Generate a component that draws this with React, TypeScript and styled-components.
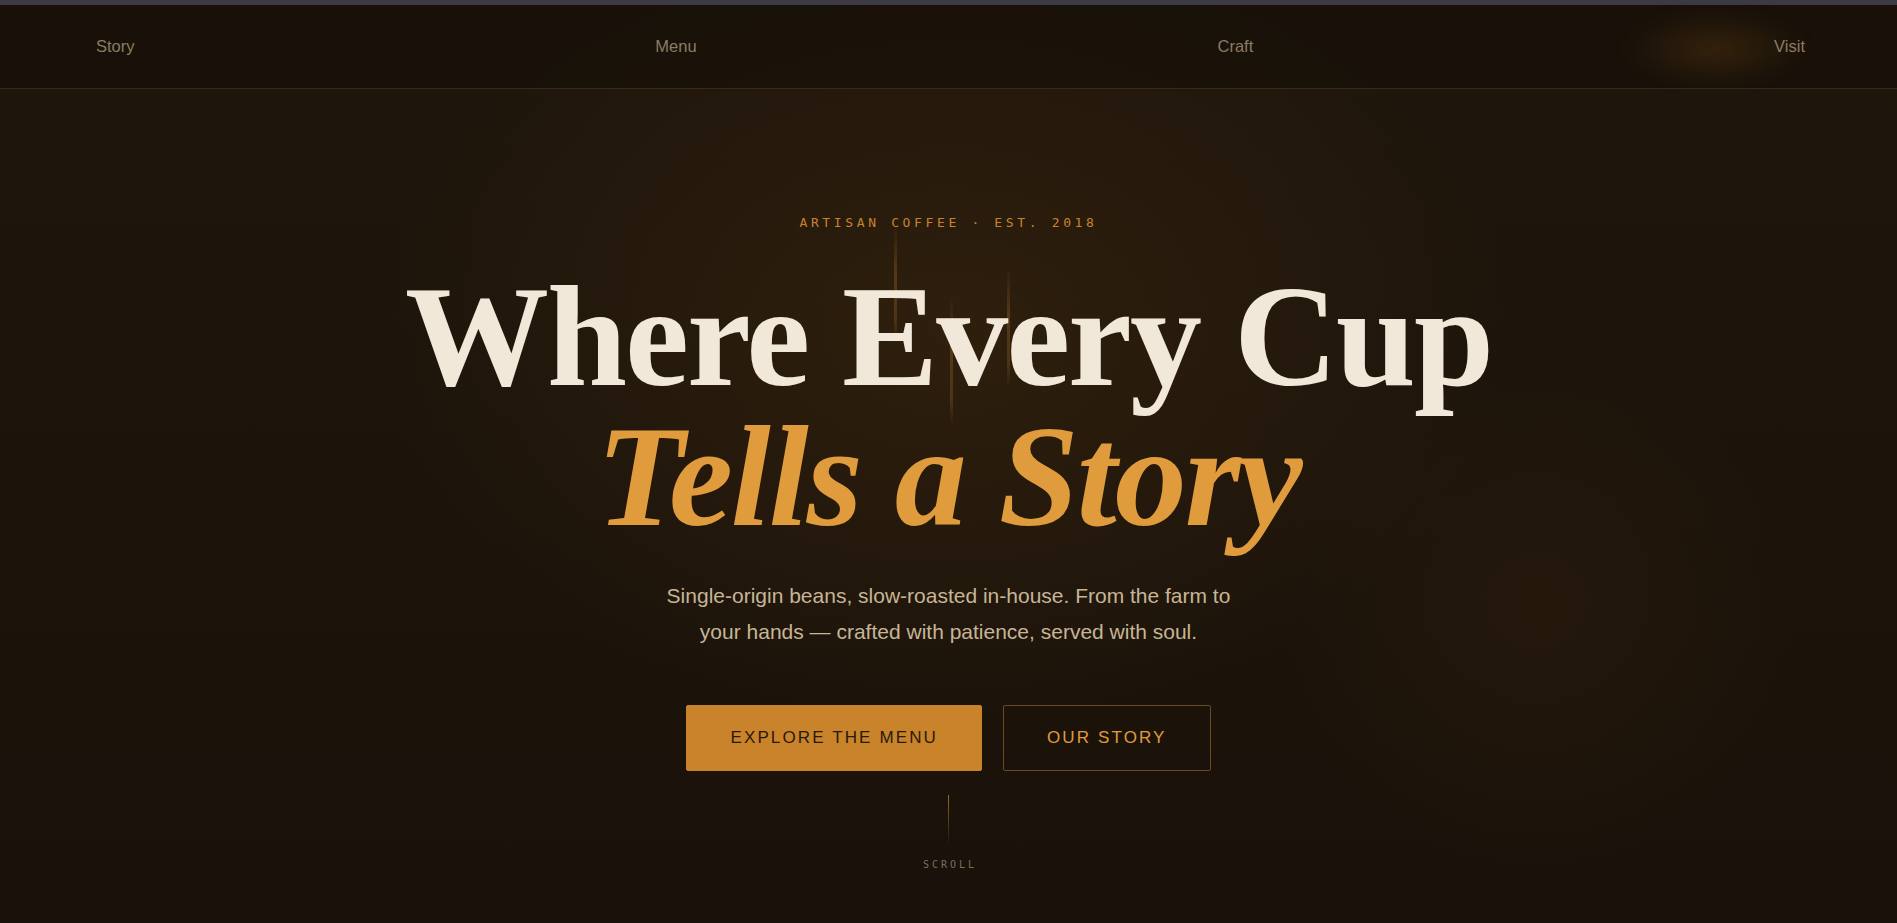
import React from "react";
import styled, { createGlobalStyle } from "styled-components";

const GlobalStyle = createGlobalStyle`
  html, body {
    margin: 0;
    padding: 0;
    background: #1b130b;
  }
  * {
    box-sizing: border-box;
  }
`;

const Page = styled.div`
  min-height: 100vh;
  overflow: hidden;
  background:
    radial-gradient(ellipse 760px 520px at 50% 36%, rgba(58, 38, 14, 0.6), transparent 75%),
    radial-gradient(circle 320px at 81% 66%, rgba(66, 40, 12, 0.22), transparent 80%),
    linear-gradient(180deg, #1f160c 0%, #1a120a 100%);
`;

const TopStrip = styled.div`
  height: 5px;
  background: #3c3b43;
`;

const Nav = styled.nav`
  position: relative;
  display: flex;
  justify-content: space-between;
  align-items: center;
  height: 84px;
  padding: 0 92px 0 96px;
  background: rgba(20, 14, 8, 0.55);
  border-bottom: 1px solid #3a2914;
`;

const NavGlow = styled.div`
  position: absolute;
  left: 1625px;
  top: 8px;
  width: 180px;
  height: 72px;
  border-radius: 40%;
  background: radial-gradient(ellipse at center, rgba(66, 42, 14, 0.7), transparent 72%);
  filter: blur(8px);
  pointer-events: none;
`;

const NavLink = styled.a`
  position: relative;
  color: #8c7c62;
  font-family: "Liberation Sans", Arial, sans-serif;
  font-size: 16.5px;
  text-decoration: none;
  cursor: pointer;
`;

const Hero = styled.main`
  display: flex;
  flex-direction: column;
  align-items: center;
  padding-top: 126px;
  text-align: center;
`;

const Overline = styled.div`
  color: #c8822d;
  font-family: "DejaVu Sans Mono", "Liberation Mono", monospace;
  font-size: 13px;
  letter-spacing: 0.28em;
  line-height: 15px;
`;

const Headline = styled.h1`
  position: relative;
  z-index: 0;
  margin: 37px 0 0;
  color: #f2e8d9;
  font-family: "Liberation Serif", "Times New Roman", serif;
  font-weight: 700;
  font-size: 144px;
  line-height: 0.97;
  letter-spacing: -0.014em;
`;

const Accent = styled.span`
  display: block;
  color: #e09b3d;
  font-style: italic;
`;

const Steam = styled.span<{ $x: number; $top: number; $h: number }>`
  position: absolute;
  z-index: -1;
  left: calc(50% + ${p => p.$x}px);
  top: ${p => p.$top}px;
  width: 3px;
  height: ${p => p.$h}px;
  background: linear-gradient(
    180deg,
    transparent,
    rgba(120, 78, 30, 0.55) 40%,
    rgba(120, 78, 30, 0.45) 80%,
    transparent
  );
`;

const Lead = styled.p`
  margin: 32px 0 0;
  max-width: 585px;
  color: #c6b597;
  font-family: "Liberation Sans", Arial, sans-serif;
  font-size: 21px;
  line-height: 1.685;
`;

const Actions = styled.div`
  display: flex;
  gap: 21px;
  margin-top: 56px;
`;

const Button = styled.a<{ $primary?: boolean }>`
  display: inline-block;
  padding: 22px 43px;
  border: 1px solid ${p => (p.$primary ? "#c8832b" : "#6a4a22")};
  border-radius: 2px;
  background: ${p => (p.$primary ? "#c8832b" : "transparent")};
  color: ${p => (p.$primary ? "#2a1a0a" : "#e09b3e")};
  font-family: "Liberation Sans", Arial, sans-serif;
  font-size: 17px;
  line-height: 20px;
  letter-spacing: 0.125em;
  text-transform: uppercase;
  text-decoration: none;
  cursor: pointer;
`;

const Scroll = styled.div`
  display: flex;
  flex-direction: column;
  align-items: center;
  margin-top: 24px;
`;

const ScrollLine = styled.div`
  width: 1px;
  height: 50px;
  background: linear-gradient(180deg, #9a6a2a, transparent);
`;

const ScrollLabel = styled.div`
  margin-top: 14px;
  color: #7d6d58;
  font-family: "DejaVu Sans Mono", "Liberation Mono", monospace;
  font-size: 10px;
  letter-spacing: 0.3em;
  padding-left: 0.3em;
`;

const links = ["Story", "Menu", "Craft", "Visit"];

export default function App() {
  return (
    <Page>
      <GlobalStyle />
      <TopStrip />
      <Nav>
        <NavGlow />
        {links.map(l => (
          <NavLink key={l}>{l}</NavLink>
        ))}
      </Nav>
      <Hero>
        <Overline>ARTISAN COFFEE · EST. 2018</Overline>
        <Headline>
          <Steam $x={-55} $top={-42} $h={118} />
          <Steam $x={1} $top={30} $h={128} />
          <Steam $x={58} $top={0} $h={120} />
          Where Every Cup
          <Accent>Tells a Story</Accent>
        </Headline>
        <Lead>
          Single-origin beans, slow-roasted in-house. From the farm to your
          hands — crafted with patience, served with soul.
        </Lead>
        <Actions>
          <Button $primary>Explore the Menu</Button>
          <Button>Our Story</Button>
        </Actions>
        <Scroll>
          <ScrollLine />
          <ScrollLabel>SCROLL</ScrollLabel>
        </Scroll>
      </Hero>
    </Page>
  );
}
